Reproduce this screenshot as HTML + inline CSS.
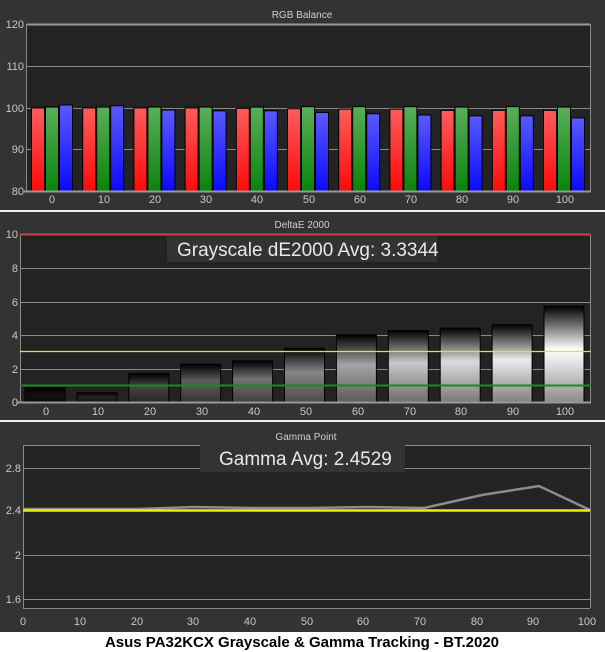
<!DOCTYPE html>
<html><head><meta charset="utf-8"><style>
html,body{margin:0;padding:0;background:#fff;}
svg{display:block;font-family:"Liberation Sans",sans-serif;}
.ax{fill:#c8c8c8;font-size:11px;}
.tt{fill:#cfcfcf;font-size:10px;}
</style></head><body>
<svg id="s" width="605" height="652" viewBox="0 0 605 652" xmlns="http://www.w3.org/2000/svg">
<defs>
<linearGradient id="gr" x1="0" y1="0" x2="0" y2="1"><stop offset="0" stop-color="#ff5c5c"/><stop offset="1" stop-color="#ff0a0a"/></linearGradient>
<linearGradient id="gg" x1="0" y1="0" x2="0" y2="1"><stop offset="0" stop-color="#5aae5a"/><stop offset="1" stop-color="#0a840a"/></linearGradient>
<linearGradient id="gb" x1="0" y1="0" x2="0" y2="1"><stop offset="0" stop-color="#5a5aff"/><stop offset="1" stop-color="#0a0aff"/></linearGradient>
</defs>
<rect x="0" y="0" width="605" height="632" fill="#333"/>
<rect x="0" y="632" width="605" height="20" fill="#fff"/>
<rect x="0" y="210" width="605" height="2" fill="#eee"/>
<rect x="0" y="420" width="605" height="2" fill="#eee"/>
<!-- Panel 1 -->
<text class="tt" x="302" y="18" text-anchor="middle">RGB Balance</text>
<rect x="27" y="24" width="563" height="167" fill="#232323"/>
<g stroke="#8a8a8a" stroke-width="1">
<line x1="27" y1="24.5" x2="590" y2="24.5" stroke-width="2" stroke="#999"/>
<line x1="27" y1="66.5" x2="590" y2="66.5"/>
<line x1="27" y1="108.5" x2="590" y2="108.5"/>
<line x1="27" y1="149.5" x2="590" y2="149.5"/>
<line x1="26.5" y1="24" x2="26.5" y2="192"/>
<line x1="590.5" y1="24" x2="590.5" y2="192"/>
</g>
<g id="b1"></g>
<line x1="24" y1="191.5" x2="591" y2="191.5" stroke="#999" stroke-width="2"/>
<g class="ax" text-anchor="end">
<text x="24" y="28">120</text><text x="24" y="70">110</text><text x="24" y="112">100</text><text x="24" y="153">90</text><text x="24" y="195">80</text>
</g>
<g class="ax" text-anchor="middle">
<text x="52" y="203">0</text><text x="104" y="203">10</text><text x="155" y="203">20</text><text x="206" y="203">30</text><text x="257" y="203">40</text><text x="309" y="203">50</text><text x="360" y="203">60</text><text x="411" y="203">70</text><text x="462" y="203">80</text><text x="513" y="203">90</text><text x="565" y="203">100</text>
</g>
<!-- Panel 2 -->
<text class="tt" x="302" y="228" text-anchor="middle">DeltaE 2000</text>
<rect x="20" y="234" width="571" height="168" fill="#232323"/>
<g stroke="#8a8a8a" stroke-width="1">
<line x1="20" y1="268.5" x2="591" y2="268.5"/>
<line x1="20" y1="302.5" x2="591" y2="302.5"/>
<line x1="20" y1="335.5" x2="591" y2="335.5"/>
<line x1="20" y1="369.5" x2="591" y2="369.5"/>
<line x1="20.5" y1="234" x2="20.5" y2="403"/>
<line x1="590.5" y1="234" x2="590.5" y2="403"/>
</g>
<rect x="167" y="236" width="270" height="26" fill="#333"/>
<text x="177" y="256" fill="#e8e8e8" font-size="19px">Grayscale dE2000 Avg: 3.3344</text>
<g id="b2"></g>
<line x1="20" y1="234.5" x2="591" y2="234.5" stroke="#d24040" stroke-width="2"/>
<line x1="20" y1="351.5" x2="591" y2="351.5" stroke="#e6e620" stroke-width="1.2"/>
<line x1="20" y1="385.5" x2="591" y2="385.5" stroke="#1c8a1c" stroke-width="2"/>
<line x1="17" y1="402.5" x2="591" y2="402.5" stroke="#999" stroke-width="2"/>
<g class="ax" text-anchor="end">
<text x="18" y="238">10</text><text x="18" y="272">8</text><text x="18" y="306">6</text><text x="18" y="339">4</text><text x="18" y="373">2</text><text x="18" y="406">0</text>
</g>
<g class="ax" text-anchor="middle">
<text x="46" y="415">0</text><text x="98" y="415">10</text><text x="150" y="415">20</text><text x="202" y="415">30</text><text x="254" y="415">40</text><text x="306" y="415">50</text><text x="358" y="415">60</text><text x="410" y="415">70</text><text x="461" y="415">80</text><text x="513" y="415">90</text><text x="565" y="415">100</text>
</g>
<!-- Panel 3 -->
<text class="tt" x="306" y="440" text-anchor="middle">Gamma Point</text>
<rect x="23" y="445" width="567" height="163" fill="#232323"/>
<g stroke="#8a8a8a" stroke-width="1">
<line x1="23" y1="445.5" x2="590" y2="445.5"/>
<line x1="23" y1="468.5" x2="590" y2="468.5"/>
<line x1="23" y1="555.5" x2="590" y2="555.5"/>
<line x1="23" y1="599.5" x2="590" y2="599.5"/>
<line x1="23.5" y1="445" x2="23.5" y2="608"/>
<line x1="590.5" y1="445" x2="590.5" y2="608"/>
<line x1="23" y1="608.5" x2="590" y2="608.5"/>
</g>
<rect x="200" y="445" width="205" height="27" fill="#333"/>
<text x="219" y="465" fill="#e8e8e8" font-size="19px">Gamma Avg: 2.4529</text>
<polyline fill="none" stroke="#8c8c8c" stroke-width="2.5" points="23,509 80,509 138,509 195,507 252,508 310,508 367,507 424,508 482,495 539,486 590,510"/>
<line x1="23" y1="510.5" x2="590" y2="510.5" stroke="#f0f000" stroke-width="2.5"/>
<g class="ax" text-anchor="end">
<text x="21" y="472">2.8</text><text x="21" y="514">2.4</text><text x="21" y="559">2</text><text x="21" y="603">1.6</text>
</g>
<g class="ax" text-anchor="middle">
<text x="23" y="625">0</text><text x="80" y="625">10</text><text x="137" y="625">20</text><text x="193" y="625">30</text><text x="250" y="625">40</text><text x="307" y="625">50</text><text x="363" y="625">60</text><text x="420" y="625">70</text><text x="477" y="625">80</text><text x="533" y="625">90</text><text x="587" y="625">100</text>
</g>
<text x="302" y="647" text-anchor="middle" font-weight="bold" font-size="15px" fill="#000">Asus PA32KCX Grayscale &amp; Gamma Tracking - BT.2020</text>
</svg>
<script>
var ns="http://www.w3.org/2000/svg";
function R(g,x,y,w,h,f){var r=document.createElementNS(ns,"rect");r.setAttribute("x",x);r.setAttribute("y",y);r.setAttribute("width",w);r.setAttribute("height",h);r.setAttribute("fill",f);r.setAttribute("stroke","#000");r.setAttribute("stroke-width","1");g.appendChild(r);}
var rv=[99.9,99.9,99.9,99.9,99.8,99.7,99.6,99.6,99.3,99.3,99.3];
var gv=[100.1,100.1,100.1,100.1,100.1,100.2,100.2,100.2,100.1,100.2,100.1];
var bv=[100.6,100.4,99.4,99.2,99.2,98.8,98.5,98.2,98.0,98.0,97.5];
var g1=document.getElementById("b1");
for(var i=0;i<11;i++){var x=27+i*51.2+4.5;
[[rv,"url(#gr)",0],[gv,"url(#gg)",14],[bv,"url(#gb)",28]].forEach(function(a){var t=191-(a[0][i]-80)*4.175;R(g1,x+a[2],t,13,191-t,a[1]);});}
var dv=[0.85,0.55,1.7,2.25,2.45,3.2,4.0,4.25,4.4,4.6,5.7];
var cs=[18,35,70,95,115,135,165,200,220,235,255];
var g2=document.getElementById("b2");var defs=document.querySelector("defs");
for(var i=0;i<11;i++){var c=cs[i];var lg=document.createElementNS(ns,"linearGradient");lg.setAttribute("id","d"+i);lg.setAttribute("x1","0");lg.setAttribute("y1","0");lg.setAttribute("x2","0");lg.setAttribute("y2","1");
var top=Math.min(255,c+10),bot=Math.max(0,Math.round(c*0.55));
lg.innerHTML='<stop offset="0" stop-color="rgb('+top+','+top+','+top+')"/><stop offset="0.45" stop-color="rgb('+c+','+c+','+c+')"/><stop offset="1" stop-color="rgb('+bot+','+bot+','+bot+')"/>';defs.appendChild(lg);
var x=20+i*51.9+5;var t=402-dv[i]*16.8;R(g2,x,t,40,402-t,"url(#d"+i+")");}
</script>
</body></html>
